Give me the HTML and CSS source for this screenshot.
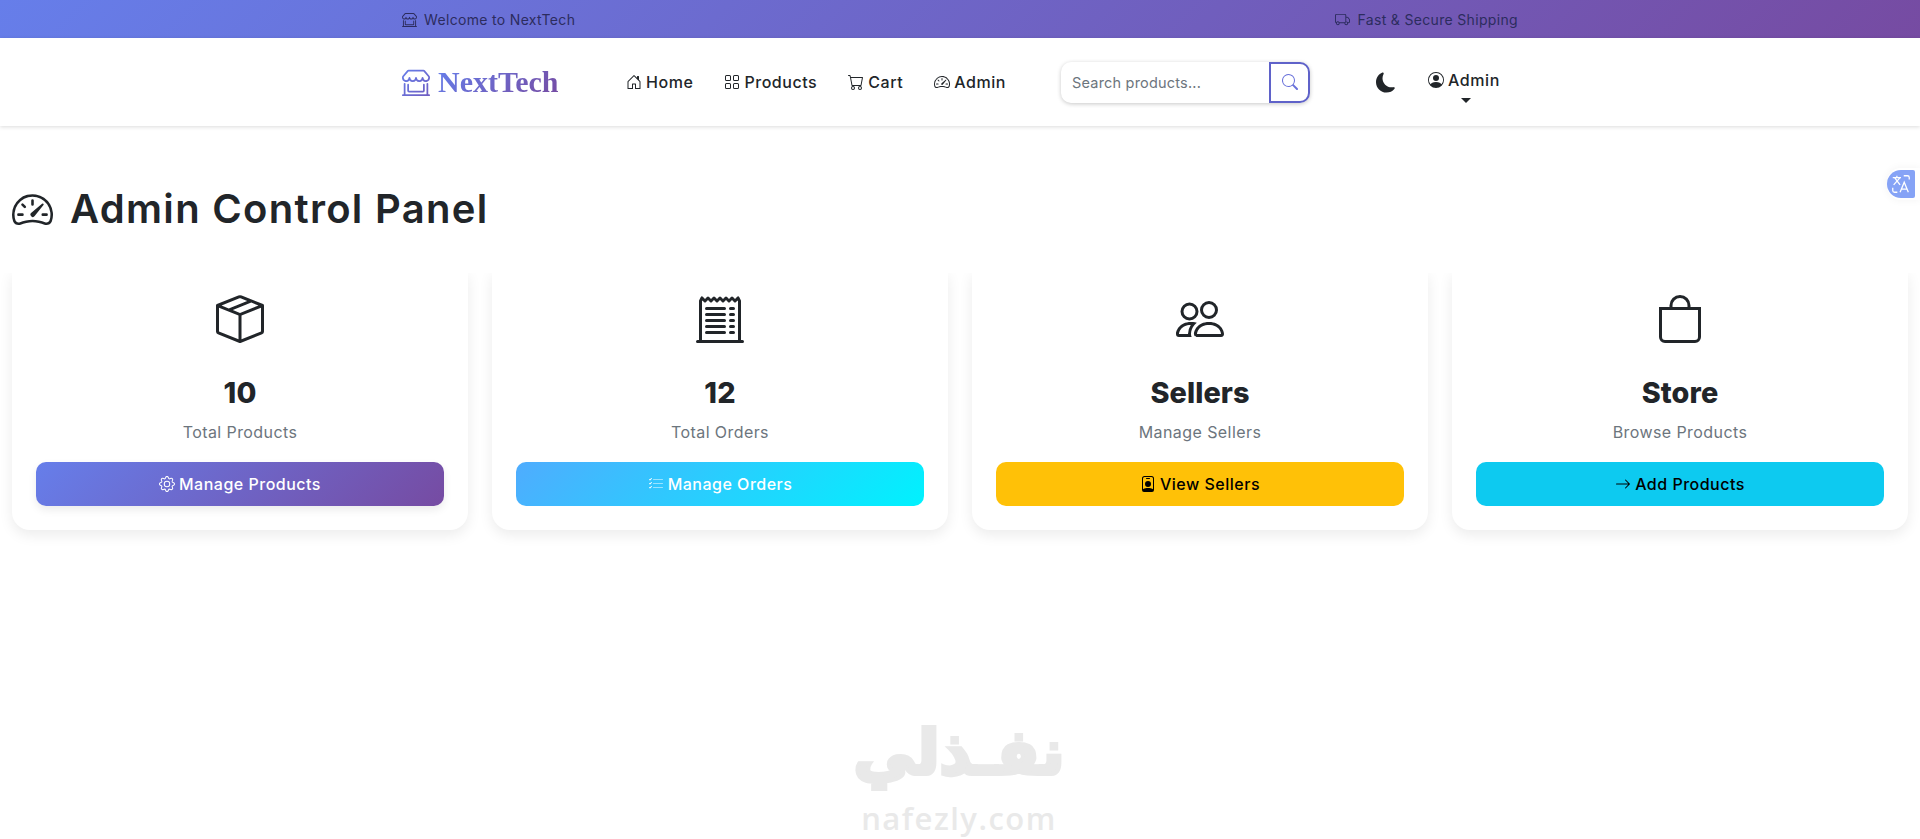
FILE: index.html
```html
<!DOCTYPE html>
<html lang="en">
<head>
<meta charset="utf-8">
<title>NextTech Admin</title>
<link rel="stylesheet" href="styles.css">
</head>
<body>
<svg class="defs" width="0" height="0" aria-hidden="true">
<defs>
<linearGradient id="brand" x1="0" y1="0" x2="1" y2="1"><stop offset="0" stop-color="#667eea"/><stop offset="1" stop-color="#6f5cc0"/></linearGradient>
<symbol id="i-shop" viewBox="0 0 16 16"><path d="M2.97 1.35A1 1 0 0 1 3.73 1h8.54a1 1 0 0 1 .76.35l2.609 3.044A1.5 1.5 0 0 1 16 5.37v.255a2.375 2.375 0 0 1-4.25 1.458A2.371 2.371 0 0 1 9.875 8 2.37 2.37 0 0 1 8 7.083 2.37 2.37 0 0 1 6.125 8a2.37 2.37 0 0 1-1.875-.917A2.375 2.375 0 0 1 0 5.625V5.37a1.5 1.5 0 0 1 .361-.976l2.61-3.045zm1.78 4.275a1.375 1.375 0 0 0 2.75 0 .5.5 0 0 1 1 0 1.375 1.375 0 0 0 2.75 0 .5.5 0 0 1 1 0 1.375 1.375 0 1 0 2.75 0V5.37a.5.5 0 0 0-.12-.325L12.27 2H3.73L1.12 5.045A.5.5 0 0 0 1 5.37v.255a1.375 1.375 0 0 0 2.75 0 .5.5 0 0 1 1 0zM1.5 8.5A.5.5 0 0 1 2 9v6h12V9a.5.5 0 0 1 1 0v6h.5a.5.5 0 0 1 0 1H.5a.5.5 0 0 1 0-1H1V9a.5.5 0 0 1 .5-.5zm2 .5a.5.5 0 0 1 .5.5V13h8V9.5a.5.5 0 0 1 1 0V13a1 1 0 0 1-1 1H4a1 1 0 0 1-1-1V9.5a.5.5 0 0 1 .5-.5z"/></symbol>
<symbol id="i-truck" viewBox="0 0 16 16"><path d="M0 3.5A1.5 1.5 0 0 1 1.5 2h9A1.5 1.5 0 0 1 12 3.5V5h1.02a1.5 1.5 0 0 1 1.17.563l1.481 1.85a1.5 1.5 0 0 1 .329.938V10.5a1.5 1.5 0 0 1-1.5 1.5H14a2 2 0 1 1-4 0H5a2 2 0 1 1-3.998-.085A1.5 1.5 0 0 1 0 10.5v-7zm1.294 7.456A1.999 1.999 0 0 1 4.732 11h5.536a2.01 2.01 0 0 1 .732-.732V3.5a.5.5 0 0 0-.5-.5h-9a.5.5 0 0 0-.5.5v7a.5.5 0 0 0 .294.456zM12 10a2 2 0 0 1 1.732 1h.768a.5.5 0 0 0 .5-.5V8.35a.5.5 0 0 0-.11-.312l-1.48-1.85A.5.5 0 0 0 13.02 6H12v4zm-9 1a1 1 0 1 0 0 2 1 1 0 0 0 0-2zm9 0a1 1 0 1 0 0 2 1 1 0 0 0 0-2z"/></symbol>
<symbol id="i-house" viewBox="0 0 16 16"><path d="M8.354 1.146a.5.5 0 0 0-.708 0l-6 6A.5.5 0 0 0 1.5 7.5v7a.5.5 0 0 0 .5.5h4.5a.5.5 0 0 0 .5-.5v-4h2v4a.5.5 0 0 0 .5.5H14a.5.5 0 0 0 .5-.5v-7a.5.5 0 0 0-.146-.354L13 5.793V2.5a.5.5 0 0 0-.5-.5h-1a.5.5 0 0 0-.5.5v1.293L8.354 1.146zM2.5 14V7.707l5.5-5.5 5.5 5.5V14H10v-4a.5.5 0 0 0-.5-.5h-3a.5.5 0 0 0-.5.5v4H2.5z"/></symbol>
<symbol id="i-grid" viewBox="0 0 16 16"><path d="M1 2.5A1.5 1.5 0 0 1 2.5 1h3A1.5 1.5 0 0 1 7 2.5v3A1.5 1.5 0 0 1 5.5 7h-3A1.5 1.5 0 0 1 1 5.5v-3zM2.5 2a.5.5 0 0 0-.5.5v3a.5.5 0 0 0 .5.5h3a.5.5 0 0 0 .5-.5v-3a.5.5 0 0 0-.5-.5h-3zm6.5.5A1.5 1.5 0 0 1 10.5 1h3A1.5 1.5 0 0 1 15 2.5v3A1.5 1.5 0 0 1 13.5 7h-3A1.5 1.5 0 0 1 9 5.5v-3zm1.5-.5a.5.5 0 0 0-.5.5v3a.5.5 0 0 0 .5.5h3a.5.5 0 0 0 .5-.5v-3a.5.5 0 0 0-.5-.5h-3zM1 10.5A1.5 1.5 0 0 1 2.5 9h3A1.5 1.5 0 0 1 7 10.5v3A1.5 1.5 0 0 1 5.5 15h-3A1.5 1.5 0 0 1 1 13.5v-3zm1.5-.5a.5.5 0 0 0-.5.5v3a.5.5 0 0 0 .5.5h3a.5.5 0 0 0 .5-.5v-3a.5.5 0 0 0-.5-.5h-3zm6.5.5A1.5 1.5 0 0 1 10.5 9h3a1.5 1.5 0 0 1 1.5 1.5v3a1.5 1.5 0 0 1-1.5 1.5h-3A1.5 1.5 0 0 1 9 13.5v-3zm1.5-.5a.5.5 0 0 0-.5.5v3a.5.5 0 0 0 .5.5h3a.5.5 0 0 0 .5-.5v-3a.5.5 0 0 0-.5-.5h-3z"/></symbol>
<symbol id="i-cart" viewBox="0 0 16 16"><path d="M0 1.5A.5.5 0 0 1 .5 1H2a.5.5 0 0 1 .485.379L2.89 3H14.5a.5.5 0 0 1 .491.592l-1.5 8A.5.5 0 0 1 13 12H4a.5.5 0 0 1-.491-.408L2.01 3.607 1.61 2H.5a.5.5 0 0 1-.5-.5zM3.102 4l1.313 7h8.17l1.313-7H3.102zM5 12a2 2 0 1 0 0 4 2 2 0 0 0 0-4zm7 0a2 2 0 1 0 0 4 2 2 0 0 0 0-4zm-7 1a1 1 0 1 1 0 2 1 1 0 0 1 0-2zm7 0a1 1 0 1 1 0 2 1 1 0 0 1 0-2z"/></symbol>
<symbol id="i-speed" viewBox="0 0 16 16"><path d="M8 4a.5.5 0 0 1 .5.5V6a.5.5 0 0 1-1 0V4.5A.5.5 0 0 1 8 4zM3.732 5.732a.5.5 0 0 1 .707 0l.915.914a.5.5 0 1 1-.708.708l-.914-.915a.5.5 0 0 1 0-.707zM2 10a.5.5 0 0 1 .5-.5h1.586a.5.5 0 0 1 0 1H2.5A.5.5 0 0 1 2 10zm9.5 0a.5.5 0 0 1 .5-.5h1.5a.5.5 0 0 1 0 1H12a.5.5 0 0 1-.5-.5zm.754-4.246a.389.389 0 0 0-.527-.02L7.547 9.31a.91.91 0 1 0 1.302 1.258l3.434-4.297a.389.389 0 0 0-.029-.518z"/><path fill-rule="evenodd" d="M0 10a8 8 0 1 1 15.547 2.661c-.442 1.253-1.845 1.602-2.932 1.25C11.309 13.488 9.475 13 8 13c-1.474 0-3.31.488-4.615.911-1.087.352-2.49.003-2.932-1.25A7.988 7.988 0 0 1 0 10zm8-7a7 7 0 0 0-6.603 9.329c.203.575.923.876 1.68.63C4.397 12.533 6.358 12 8 12s3.604.532 4.923.96c.757.245 1.477-.056 1.68-.631A7 7 0 0 0 8 3z"/></symbol>
<symbol id="i-search" viewBox="0 0 16 16"><path d="M11.742 10.344a6.5 6.5 0 1 0-1.397 1.398h-.001c.03.04.062.078.098.115l3.85 3.85a1 1 0 0 0 1.415-1.414l-3.85-3.85a1.007 1.007 0 0 0-.115-.1zM12 6.5a5.5 5.5 0 1 1-11 0 5.5 5.5 0 0 1 11 0z"/></symbol>
<symbol id="i-moon" viewBox="0 0 16 16"><path d="M6 .278a.768.768 0 0 1 .08.858 7.208 7.208 0 0 0-.878 3.46c0 4.021 3.278 7.277 7.318 7.277.527 0 1.04-.055 1.533-.16a.787.787 0 0 1 .81.316.733.733 0 0 1-.031.893A8.349 8.349 0 0 1 8.344 16C3.734 16 0 12.286 0 7.71 0 4.266 2.114 1.312 5.124.06A.752.752 0 0 1 6 .278z"/></symbol>
<symbol id="i-person" viewBox="0 0 16 16"><path d="M11 6a3 3 0 1 1-6 0 3 3 0 0 1 6 0z"/><path fill-rule="evenodd" d="M0 8a8 8 0 1 1 16 0A8 8 0 0 1 0 8zm8-7a7 7 0 0 0-5.468 11.37C3.242 11.226 4.805 10 8 10s4.757 1.225 5.468 2.37A7 7 0 0 0 8 1z"/></symbol>
<symbol id="i-box" viewBox="0 0 16 16"><path d="M8.186 1.113a.5.5 0 0 0-.372 0L1.846 3.5l2.404.961L10.404 2l-2.218-.887zm3.564 1.426L5.596 5 8 5.961 14.154 3.5l-2.404-.961zm3.25 1.7-6.5 2.6v7.922l6.5-2.6V4.24zM7.5 14.762V6.838L1 4.239v7.925l6.5 2.6zM7.443.184a1.5 1.5 0 0 1 1.114 0l7.129 2.852A.5.5 0 0 1 16 3.5v8.662a1 1 0 0 1-.629.928l-7.185 2.874a.5.5 0 0 1-.372 0L.63 13.09a1 1 0 0 1-.63-.928V3.5a.5.5 0 0 1 .314-.464L7.443.184z"/></symbol>
<symbol id="i-receipt" viewBox="0 0 16 16"><path d="M3 4.5a.5.5 0 0 1 .5-.5h6a.5.5 0 1 1 0 1h-6a.5.5 0 0 1-.5-.5zm0 2a.5.5 0 0 1 .5-.5h6a.5.5 0 1 1 0 1h-6a.5.5 0 0 1-.5-.5zm0 2a.5.5 0 0 1 .5-.5h6a.5.5 0 1 1 0 1h-6a.5.5 0 0 1-.5-.5zm0 2a.5.5 0 0 1 .5-.5h6a.5.5 0 0 1 0 1h-6a.5.5 0 0 1-.5-.5zm0 2a.5.5 0 0 1 .5-.5h6a.5.5 0 0 1 0 1h-6a.5.5 0 0 1-.5-.5zM11.5 4a.5.5 0 0 0 0 1h1a.5.5 0 0 0 0-1h-1zm0 2a.5.5 0 0 0 0 1h1a.5.5 0 0 0 0-1h-1zm0 2a.5.5 0 0 0 0 1h1a.5.5 0 0 0 0-1h-1zm0 2a.5.5 0 0 0 0 1h1a.5.5 0 0 0 0-1h-1zm0 2a.5.5 0 0 0 0 1h1a.5.5 0 0 0 0-1h-1z"/><path d="M2.354.646a.5.5 0 0 0-.801.13l-.5 1A.5.5 0 0 0 1 2v13H.5a.5.5 0 0 0 0 1h15a.5.5 0 0 0 0-1H15V2a.5.5 0 0 0-.053-.224l-.5-1a.5.5 0 0 0-.8-.13L13 1.293l-.646-.647a.5.5 0 0 0-.708 0L11 1.293l-.646-.647a.5.5 0 0 0-.708 0L9 1.293 8.354.646a.5.5 0 0 0-.708 0L7 1.293 6.354.646a.5.5 0 0 0-.708 0L5 1.293 4.354.646a.5.5 0 0 0-.708 0L3 1.293 2.354.646zm-.217 1.198.51.51a.5.5 0 0 0 .707 0L4 1.707l.646.647a.5.5 0 0 0 .708 0L6 1.707l.646.647a.5.5 0 0 0 .708 0L8 1.707l.646.647a.5.5 0 0 0 .708 0L10 1.707l.646.647a.5.5 0 0 0 .708 0L12 1.707l.646.647a.5.5 0 0 0 .708 0l.509-.51.137.274V15H2V2.118l.137-.274z"/></symbol>
<symbol id="i-people" viewBox="0 0 16 16"><path d="M15 14s1 0 1-1-1-4-5-4-5 3-5 4 1 1 1 1h8Zm-7.978-1A.261.261 0 0 1 7 12.996c.001-.264.167-1.03.76-1.72C8.312 10.629 9.282 10 11 10c1.717 0 2.687.63 3.24 1.276.593.69.758 1.457.76 1.72l-.008.002a.274.274 0 0 1-.014.002H7.022ZM11 7a2 2 0 1 0 0-4 2 2 0 0 0 0 4Zm3-2a3 3 0 1 1-6 0 3 3 0 0 1 6 0ZM6.936 9.28a5.88 5.88 0 0 0-1.23-.247A7.35 7.35 0 0 0 5 9c-4 0-5 3-5 4 0 .667.333 1 1 1h4.216A2.238 2.238 0 0 1 5 13c0-1.01.377-2.042 1.09-2.904.243-.294.526-.569.846-.816ZM4.92 10A5.493 5.493 0 0 0 4 13H1c0-.26.164-1.03.76-1.724.545-.636 1.492-1.256 3.16-1.275ZM1.5 5.5a3 3 0 1 1 6 0 3 3 0 0 1-6 0Zm3-2a2 2 0 1 0 0 4 2 2 0 0 0 0-4Z"/></symbol>
<symbol id="i-bag" viewBox="0 0 16 16"><path d="M8 1a2.5 2.5 0 0 1 2.5 2.5V4h-5v-.5A2.5 2.5 0 0 1 8 1zm3.5 3v-.5a3.5 3.5 0 1 0-7 0V4H1v10a2 2 0 0 0 2 2h10a2 2 0 0 0 2-2V4h-3.5zM2 5h12v9a1 1 0 0 1-1 1H3a1 1 0 0 1-1-1V5z"/></symbol>
<symbol id="i-gear" viewBox="0 0 16 16"><path d="M8 4.754a3.246 3.246 0 1 0 0 6.492 3.246 3.246 0 0 0 0-6.492zM5.754 8a2.246 2.246 0 1 1 4.492 0 2.246 2.246 0 0 1-4.492 0z"/><path d="M9.796 1.343c-.527-1.79-3.065-1.79-3.592 0l-.094.319a.873.873 0 0 1-1.255.52l-.292-.16c-1.64-.892-3.433.902-2.54 2.541l.159.292a.873.873 0 0 1-.52 1.255l-.319.094c-1.79.527-1.79 3.065 0 3.592l.319.094a.873.873 0 0 1 .52 1.255l-.16.292c-.892 1.64.901 3.434 2.541 2.54l.292-.159a.873.873 0 0 1 1.255.52l.094.319c.527 1.79 3.065 1.79 3.592 0l.094-.319a.873.873 0 0 1 1.255-.52l.292.16c1.64.893 3.434-.902 2.54-2.541l-.159-.292a.873.873 0 0 1 .52-1.255l.319-.094c1.79-.527 1.79-3.065 0-3.592l-.319-.094a.873.873 0 0 1-.52-1.255l.16-.292c.893-1.64-.902-3.433-2.541-2.54l-.292.159a.873.873 0 0 1-1.255-.52l-.094-.319zm-2.633.283c.246-.835 1.428-.835 1.674 0l.094.319a1.873 1.873 0 0 0 2.693 1.115l.291-.16c.764-.415 1.6.42 1.184 1.185l-.159.292a1.873 1.873 0 0 0 1.116 2.692l.318.094c.835.246.835 1.428 0 1.674l-.319.094a1.873 1.873 0 0 0-1.115 2.693l.16.291c.415.764-.42 1.6-1.185 1.184l-.291-.159a1.873 1.873 0 0 0-2.693 1.116l-.094.318c-.246.835-1.428.835-1.674 0l-.094-.319a1.873 1.873 0 0 0-2.692-1.115l-.292.16c-.764.415-1.6-.42-1.184-1.185l.159-.291A1.873 1.873 0 0 0 1.945 8.93l-.319-.094c-.835-.246-.835-1.428 0-1.674l.319-.094A1.873 1.873 0 0 0 3.06 4.377l-.16-.292c-.415-.764.42-1.6 1.185-1.184l.292.159a1.873 1.873 0 0 0 2.692-1.115l.094-.319z"/></symbol>
<symbol id="i-list" viewBox="0 0 16 16"><path d="M5 11.5a.25.25 0 0 1 .25-.25h9.5a.25.25 0 0 1 0 .5h-9.5a.25.25 0 0 1-.25-.25zm0-4a.25.25 0 0 1 .25-.25h9.5a.25.25 0 0 1 0 .5h-9.5a.25.25 0 0 1-.25-.25zm0-4a.25.25 0 0 1 .25-.25h9.5a.25.25 0 0 1 0 .5h-9.5a.25.25 0 0 1-.25-.25zM3.854 2.146a.5.5 0 0 1 0 .708l-1.5 1.5a.5.5 0 0 1-.708 0l-.5-.5a.5.5 0 1 1 .708-.708L2 3.293l1.146-1.147a.5.5 0 0 1 .708 0zm0 4a.5.5 0 0 1 0 .708l-1.5 1.5a.5.5 0 0 1-.708 0l-.5-.5a.5.5 0 1 1 .708-.708L2 7.293l1.146-1.147a.5.5 0 0 1 .708 0zm0 4a.5.5 0 0 1 0 .708l-1.5 1.5a.5.5 0 0 1-.708 0l-.5-.5a.5.5 0 0 1 .708-.708l.146.147 1.146-1.147a.5.5 0 0 1 .708 0z"/></symbol>
<symbol id="i-badge" viewBox="0 0 16 16"><path d="M6.5 2a.5.5 0 0 0 0 1h3a.5.5 0 0 0 0-1h-3zM11 8a3 3 0 1 1-6 0 3 3 0 0 1 6 0z"/><path d="M4.5 0A2.5 2.5 0 0 0 2 2.5V14a2 2 0 0 0 2 2h8a2 2 0 0 0 2-2V2.5A2.5 2.5 0 0 0 11.5 0h-7zM3 2.5A1.5 1.5 0 0 1 4.5 1h7A1.5 1.5 0 0 1 13 2.5v10.795a4.2 4.2 0 0 0-.776-.492C11.392 12.387 10.063 12 8 12s-3.392.387-4.224.803a4.2 4.2 0 0 0-.776.492V2.5z"/></symbol>
<symbol id="i-arrow" viewBox="0 0 16 16"><path d="M1 8a.5.5 0 0 1 .5-.5h11.793l-3.147-3.146a.5.5 0 0 1 .708-.708l4 4a.5.5 0 0 1 0 .708l-4 4a.5.5 0 0 1-.708-.708L13.293 8.5H1.5A.5.5 0 0 1 1 8z"/></symbol>
</defs>
</svg>

<div class="topbar">
  <div class="container topbar-inner">
    <span class="top-item"><svg class="ic ic-top"><use href="#i-shop"/></svg>Welcome to NextTech</span>
    <span class="top-item"><svg class="ic ic-top"><use href="#i-truck"/></svg>Fast &amp; Secure Shipping</span>
  </div>
</div>

<header class="navbar">
  <div class="container navbar-inner">
    <a class="logo"><svg class="logo-ic"><use href="#i-shop"/></svg><span class="logo-text">NextTech</span></a>
    <nav class="nav">
      <a class="nav-link"><svg class="ic"><use href="#i-house"/></svg>Home</a>
      <a class="nav-link"><svg class="ic"><use href="#i-grid"/></svg>Products</a>
      <a class="nav-link"><svg class="ic"><use href="#i-cart"/></svg>Cart</a>
      <a class="nav-link"><svg class="ic"><use href="#i-speed"/></svg>Admin</a>
    </nav>
    <form class="search">
      <span class="search-input">Search products...</span>
      <span class="search-btn"><svg class="ic"><use href="#i-search"/></svg></span>
    </form>
    <svg class="moon"><use href="#i-moon"/></svg>
    <div class="user">
      <span class="user-name"><svg class="ic"><use href="#i-person"/></svg>Admin</span>
      <span class="caret"></span>
    </div>
  </div>
</header>

<main class="main">
  <h1 class="title"><svg class="title-ic"><use href="#i-speed"/></svg>Admin Control Panel</h1>
  <section class="cards">
    <article class="card">
      <svg class="card-ic"><use href="#i-box"/></svg>
      <h2 class="card-title">10</h2>
      <p class="card-sub">Total Products</p>
      <a class="btn btn-brand"><svg class="ic"><use href="#i-gear"/></svg>Manage Products</a>
    </article>
    <article class="card">
      <svg class="card-ic"><use href="#i-receipt"/></svg>
      <h2 class="card-title">12</h2>
      <p class="card-sub">Total Orders</p>
      <a class="btn btn-sky"><svg class="ic"><use href="#i-list"/></svg>Manage Orders</a>
    </article>
    <article class="card">
      <svg class="card-ic"><use href="#i-people"/></svg>
      <h2 class="card-title">Sellers</h2>
      <p class="card-sub">Manage Sellers</p>
      <a class="btn btn-amber"><svg class="ic"><use href="#i-badge"/></svg>View Sellers</a>
    </article>
    <article class="card">
      <svg class="card-ic"><use href="#i-bag"/></svg>
      <h2 class="card-title">Store</h2>
      <p class="card-sub">Browse Products</p>
      <a class="btn btn-cyan"><svg class="ic"><use href="#i-arrow"/></svg>Add Products</a>
    </article>
  </section>
</main>

<div class="translate">
  <span class="translate-btn">
    <svg viewBox="0 0 24 24" width="22" height="22" fill="none" stroke="#fff" stroke-width="1.4">
      <path d="M3 5h9M7.5 3v2M4 13l7-8M5 5l6 8M15 3h4a2 2 0 0 1 2 2v2M3 16v3a2 2 0 0 0 2 2h3M11 21l4.5-11 4.5 11M12.5 17.5h6"/>
    </svg>
  </span>
</div>

<div class="watermark" aria-label="nafezly">
  <div class="wm-ar" lang="ar" dir="rtl">نفـذلي</div>
  <div class="wm-en">nafezly.com</div>
</div>
</body>
</html>
```
FILE: styles.css
```css
* { box-sizing: border-box; }
html, body { margin: 0; padding: 0; }
body {
  font-family: Inter, "Open Sans", sans-serif;
  color: #212529;
  background: #fff;
  height: 839px;
  overflow: hidden;
  position: relative;
}
.defs { position: absolute; }
.ic { width: 16px; height: 16px; fill: currentColor; flex: none; }
.container { width: 1140px; margin: 0 auto; padding: 0 12px; }

.topbar {
  height: 38px;
  background: linear-gradient(135deg, #667eea 0%, #764ba2 100%);
  color: #2c2c5e;
}
.topbar-inner { display: flex; justify-content: space-between; align-items: center; height: 100%; }
.top-item { display: flex; align-items: center; gap: 7px; font-size: 14px; letter-spacing: .33px; }
.ic-top { width: 15px; height: 15px; }

.navbar {
  height: 88px;
  background: #fff;
  box-shadow: 0 1px 4px rgba(0, 0, 0, .14);
  position: relative;
}
.navbar-inner { display: flex; align-items: center; height: 100%; }
.logo { display: flex; align-items: center; gap: 8px; width: 224px; }
.logo-ic { width: 28px; height: 28px; fill: url(#brand); }
.logo-text {
  font-family: "Liberation Serif", serif;
  font-weight: 700;
  font-size: 30px;
  line-height: 1;
  background: linear-gradient(135deg, #667eea, #764ba2);
  -webkit-background-clip: text;
  background-clip: text;
  color: transparent;
}
.nav { display: flex; gap: 31px; width: 435px; }
.nav-link { display: flex; align-items: center; gap: 4px; font-size: 16px; font-weight: 500; letter-spacing: .55px; color: #212529; }

.search {
  display: flex;
  width: 249px;
  height: 41px;
  border-radius: 10px;
  box-shadow: 0 1px 4px rgba(0, 0, 0, .22);
  background: #fff;
}
.search-input {
  flex: 1;
  padding-left: 11px;
  display: flex;
  align-items: center;
  font-size: 14.5px;
  letter-spacing: .2px;
  color: #6c757d;
}
.search-btn {
  width: 41px;
  border: 2px solid #5f62c9;
  border-radius: 0 10px 10px 0;
  display: flex;
  align-items: center;
  justify-content: center;
  color: #6a72da;
}
.moon { width: 20px; height: 21px; margin-left: 66px; fill: #212529; }
.user { margin-left: 32px; display: flex; flex-direction: column; align-items: center; position: relative; top: 4px; }
.user-name { display: flex; align-items: center; gap: 4px; font-size: 16px; font-weight: 500; letter-spacing: .6px; }
.caret {
  margin-top: 8px;
  margin-left: 5px;
  border-top: 5px solid #212529;
  border-left: 5px solid transparent;
  border-right: 5px solid transparent;
}

.main { padding: 0 12px; }
.title {
  display: flex;
  align-items: center;
  gap: 17px;
  margin: 0;
  padding-top: 21px;
  height: 145px;
  font-size: 40px;
  font-weight: 600;
  letter-spacing: 1.3px;
  line-height: 50px;
}
.title-ic { width: 41px; height: 41px; fill: #212529; }
.cards { display: grid; grid-template-columns: repeat(4, 456px); gap: 24px; }
.card {
  height: 259px;
  padding: 24px;
  border-radius: 0 0 18px 18px;
  background: #fff;
  box-shadow: 0 5px 14px rgba(0, 0, 0, .08);
  clip-path: inset(2px -30px -30px -30px);
  display: flex;
  flex-direction: column;
  align-items: center;
}
.card-ic { width: 48px; height: 48px; fill: #212529; flex: none; }
.card-title { margin: 32px 0 0; font-size: 28.8px; line-height: 36px; font-weight: 800; letter-spacing: .1px; }
.card-sub { margin: 9px 0 0; font-size: 16px; line-height: 24px; color: #6c757d; letter-spacing: .42px; }
.btn {
  margin-top: 18px;
  width: 100%;
  height: 44px;
  border-radius: 10px;
  display: flex;
  align-items: center;
  justify-content: center;
  gap: 4px;
  font-size: 16px;
  font-weight: 500;
  letter-spacing: .5px;
}
.btn-brand { background: linear-gradient(135deg, #667eea, #764ba2); color: #fff; box-shadow: 0 4px 8px rgba(0, 0, 0, .08); }
.btn-sky { background: linear-gradient(135deg, #4facfe, #00f2fe); color: #fff; }
.btn-amber { background: #ffc107; color: #000; }
.btn-cyan { background: #0dcaf0; color: #000; }

.translate {
  position: absolute;
  right: 0;
  top: 168px;
  height: 32px;
  padding: 2px 5px 2px 0;
  background: #fff;
  box-shadow: 0 0 8px rgba(0, 0, 0, .05);
  border-radius: 14px 0 0 14px;
}
.translate-btn {
  width: 28px;
  height: 28px;
  border-radius: 14px 2px 2px 14px;
  background: #86a3f6;
  display: flex;
  align-items: center;
  justify-content: center;
}

.watermark {
  position: absolute;
  left: 845px;
  top: 714px;
  width: 228px;
  text-align: center;
  color: #e9e9e9;
  pointer-events: none;
}
.wm-ar {
  font-family: "DejaVu Sans", sans-serif;
  font-weight: 700;
  font-size: 62px;
  line-height: 78px;
  -webkit-text-stroke: 4px #e9e9e9;
}
.wm-en { font-family: "Open Sans", sans-serif; font-weight: 600; font-size: 31px; line-height: 40px; letter-spacing: 1.5px; margin-top: 6px; }
```
